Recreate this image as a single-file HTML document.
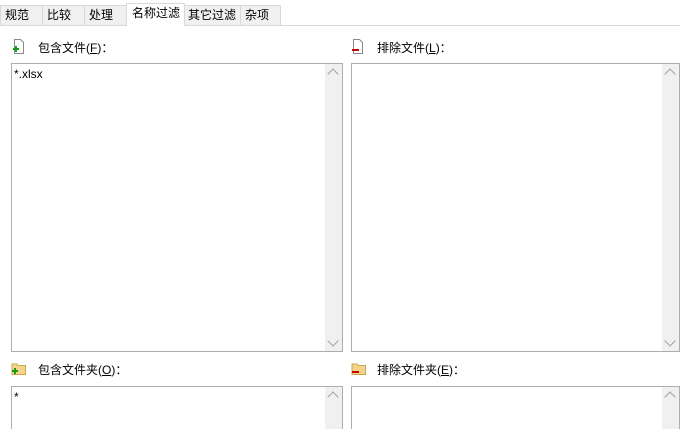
<!DOCTYPE html>
<html style="width:680px;height:429px;overflow:hidden"><head><style>
body{margin:0;width:680px;height:429px;overflow:hidden;background:#fff;font-family:"Liberation Sans","Noto Sans CJK SC",sans-serif;font-size:12px;color:#000;position:relative}
.strip{position:absolute;left:0;top:0;width:680px;height:25px;background:#fff;border-bottom:1px solid #d9d9d9}
.tab{position:absolute;top:5px;height:20px;background:#f0f0f0;border:1px solid #d9d9d9;border-bottom:none;box-sizing:border-box;line-height:19px;padding-left:4px;font-size:12px}
.tab.a{top:3px;height:23px;background:#fff;line-height:19px;padding-left:5px}
.box{position:absolute;border:1px solid #adadad;background:#fff;box-sizing:border-box}
.sb{position:absolute;right:0;top:0;bottom:0;width:17px;background:#f0f0f0}
.ar{position:absolute;left:4px;width:7px;height:7px;border-left:1px solid #a0a0a0;border-top:1px solid #a0a0a0;}
.lbl{position:absolute;font-size:12px}
.ic{position:absolute}
</style></head><body>
<div class="strip"></div>
<div class="tab" style="left:0;width:43px">规范</div>
<div class="tab" style="left:42px;width:43px">比较</div>
<div class="tab" style="left:84px;width:43px">处理</div>
<div class="tab a" style="left:126px;width:59px">名称过滤</div>
<div class="tab" style="left:184px;width:57px;padding-left:3px">其它过滤</div>
<div class="tab" style="left:240px;width:41px">杂项</div>

<svg class="ic" style="left:12px;top:39px" width="14" height="16"><path d="M2.5 .5h6l3 3v11h-9z" fill="#fff" stroke="#888"/><path d="M1 9h6v2H1zM3 7h2v6H3z" fill="#1a9a1a"/></svg>
<div class="lbl" style="left:38px;top:39px">包含文件(<u>F</u>)：</div>
<svg class="ic" style="left:351px;top:39px" width="14" height="16"><path d="M2.5 .5h6l3 3v11h-9z" fill="#fff" stroke="#888"/><path d="M1 10h7v2H1z" fill="#c00"/></svg>
<div class="lbl" style="left:377px;top:39px">排除文件(<u>L</u>)：</div>

<div class="box" style="left:11px;top:63px;width:332px;height:289px"><div style="position:absolute;left:2px;top:3px">*.xlsx</div><div class="sb"><div class="ar" style="top:6px;transform:rotate(45deg)"></div><div class="ar" style="bottom:6px;transform:rotate(225deg)"></div></div></div>
<div class="box" style="left:351px;top:63px;width:329px;height:289px"><div class="sb"><div class="ar" style="top:6px;transform:rotate(45deg)"></div><div class="ar" style="bottom:6px;transform:rotate(225deg)"></div></div></div>

<svg class="ic" style="left:11px;top:362px" width="16" height="14"><path d="M1 2h5l1 1.5h7.5v9H1z" fill="#f2d58a" stroke="#c9a650"/><path d="M1 8h6v2H1zM3 6h2v6H3z" fill="#1a9a1a"/></svg>
<div class="lbl" style="left:38px;top:361px">包含文件夹(<u>O</u>)：</div>
<svg class="ic" style="left:351px;top:362px" width="16" height="14"><path d="M1 2h5l1 1.5h7.5v9H1z" fill="#f2d58a" stroke="#c9a650"/><path d="M1 9h7v2H1z" fill="#c00"/></svg>
<div class="lbl" style="left:377px;top:361px">排除文件夹(<u>E</u>)：</div>

<div class="box" style="left:11px;top:386px;width:332px;height:43px;border-bottom:none"><div style="position:absolute;left:2px;top:3px">*</div><div class="sb"><div class="ar" style="top:6px;transform:rotate(45deg)"></div></div></div>
<div class="box" style="left:351px;top:386px;width:329px;height:43px;border-bottom:none"><div class="sb"><div class="ar" style="top:6px;transform:rotate(45deg)"></div></div></div>
</body></html>
